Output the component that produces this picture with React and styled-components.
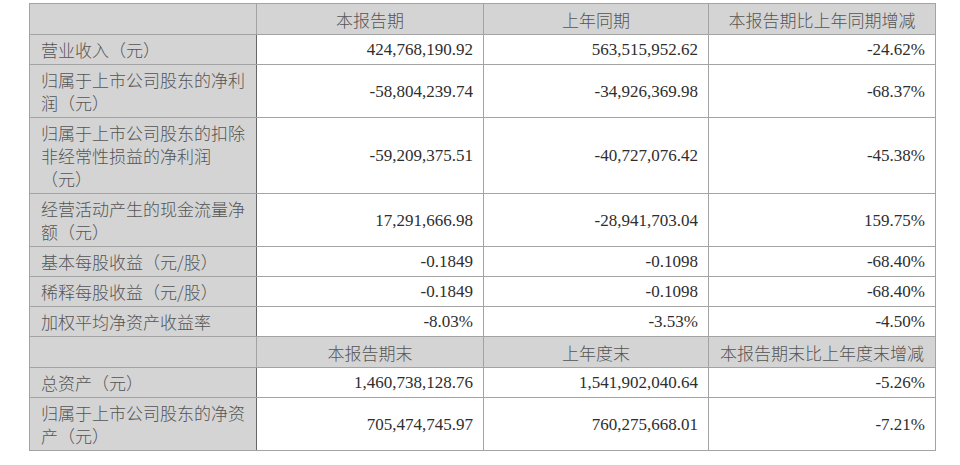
import styled, { createGlobalStyle } from 'styled-components';

const GlobalStyle = createGlobalStyle`
  html, body {
    margin: 0;
    padding: 0;
    background: #ffffff;
  }
  body {
    font-family: "Liberation Serif", "Noto Sans CJK SC", serif;
  }
`

const Page = styled.div`
  padding: 3px 0 0 29px;
`

const Table = styled.table`
  border-collapse: collapse;
  table-layout: fixed;
  width: 906px;
  font-size: 17px;
  line-height: 23px;
`

const Cell = styled.td`
  border: 1px solid #a3a3a3;
  padding: 3px 10px 3px 11px;
  vertical-align: middle;
  color: #2e2e2e;
  text-align: right;
  white-space: nowrap;
`

const LabelCell = styled.td`
  border: 1px solid #a3a3a3;
  border-right: 1px solid #666666;
  background: #d4d4d4;
  color: #555555;
  padding: 3px 6px 3px 11px;
  text-align: left;
  vertical-align: middle;
  font-family: "Noto Sans CJK SC", "Liberation Serif", sans-serif;
  font-weight: 300;
`

const HeadCell = styled.td`
  border: 1px solid #a3a3a3;
  background: #d4d4d4;
  color: #555555;
  padding: 4px 4px 3px;
  text-align: center;
  vertical-align: middle;
  font-family: "Noto Sans CJK SC", sans-serif;
  font-weight: 300;
  letter-spacing: ${p => p.$spread ? '0.5px' : '0'};
`

const firstHead = ['本报告期', '上年同期', '本报告期比上年同期增减']
const firstRows = [
  ['营业收入（元）', '424,768,190.92', '563,515,952.62', '-24.62%'],
  ['归属于上市公司股东的净利润（元）', '-58,804,239.74', '-34,926,369.98', '-68.37%'],
  ['归属于上市公司股东的扣除非经常性损益的净利润（元）', '-59,209,375.51', '-40,727,076.42', '-45.38%'],
  ['经营活动产生的现金流量净额（元）', '17,291,666.98', '-28,941,703.04', '159.75%'],
  ['基本每股收益（元/股）', '-0.1849', '-0.1098', '-68.40%'],
  ['稀释每股收益（元/股）', '-0.1849', '-0.1098', '-68.40%'],
  ['加权平均净资产收益率', '-8.03%', '-3.53%', '-4.50%'],
]
const secondHead = ['本报告期末', '上年度末', '本报告期末比上年度末增减']
const secondRows = [
  ['总资产（元）', '1,460,738,128.76', '1,541,902,040.64', '-5.26%'],
  ['归属于上市公司股东的净资产（元）', '705,474,745.97', '760,275,668.01', '-7.21%'],
]

const HeadRow = ({ titles }) => (
  <tr>
    <HeadCell />
    {titles.map((t) => (
      <HeadCell key={t}>{t}</HeadCell>
    ))}
  </tr>
)

const DataRow = ({ row }) => (
  <tr>
    <LabelCell>{row[0]}</LabelCell>
    <Cell>{row[1]}</Cell>
    <Cell>{row[2]}</Cell>
    <Cell>{row[3]}</Cell>
  </tr>
)

const App = () => {
  return (
    <Page>
      <GlobalStyle />
      <Table>
        <colgroup>
          <col style={{ width: 227 }} />
          <col style={{ width: 227 }} />
          <col style={{ width: 225 }} />
          <col style={{ width: 227 }} />
        </colgroup>
        <tbody>
          <HeadRow titles={firstHead} />
          {firstRows.map((r) => <DataRow key={r[0]} row={r} />)}
          <HeadRow titles={secondHead} />
          {secondRows.map((r) => <DataRow key={r[0]} row={r} />)}
        </tbody>
      </Table>
    </Page>
  )
}

export default App
